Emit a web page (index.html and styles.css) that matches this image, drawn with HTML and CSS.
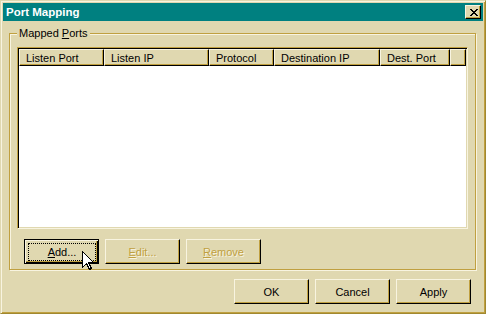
FILE: index.html
```html
<!doctype html>
<html lang="en">
<head>
    <meta charset="utf-8">
    <title>Port Mapping</title>
    <link rel="stylesheet" href="styles.css">
</head>
<body>
<div class="window">
    <div class="titlebar">
        <span class="title">Port Mapping</span>
        <button class="close" type="button" aria-label="Close">
            <svg width="8" height="7" viewBox="0 0 8 7" shape-rendering="crispEdges">
                <path d="M0 0h2v1h-2z M6 0h2v1h-2z M1 1h2v1h-2z M5 1h2v1h-2z M2 2h4v1h-4z M3 3h2v1h-2z M2 4h4v1h-4z M1 5h2v1h-2z M5 5h2v1h-2z M0 6h2v1h-2z M6 6h2v1h-2z" fill="#000"/>
            </svg>
        </button>
    </div>

    <div class="content">
        <div class="group">
            <div class="legend">Mapped <u>P</u>orts</div>
            <div class="listview">
                <div class="header">
                    <div class="col">Listen Port</div>
                    <div class="col">Listen IP</div>
                    <div class="col">Protocol</div>
                    <div class="col">Destination IP</div>
                    <div class="col">Dest. Port</div>
                    <div class="col"></div>
                </div>
            </div>
            <div class="group-buttons">
                <button class="btn default" type="button"><span class="focus"><u>A</u>dd...</span></button>
                <button class="btn" type="button" disabled><u>E</u>dit...</button>
                <button class="btn" type="button" disabled><u>R</u>emove</button>
            </div>
        </div>

        <div class="dialog-buttons">
            <button class="btn" type="button">OK</button>
            <button class="btn" type="button">Cancel</button>
            <button class="btn" type="button">Apply</button>
        </div>
    </div>

    <!-- mouse pointer over the Add button -->
    <svg class="cursor" width="13" height="20" viewBox="0 0 13 20" shape-rendering="crispEdges">
        <polygon points="0.5,0.5 0.5,16.5 4.5,12.5 7.5,18.5 9.5,17.5 6.5,11.5 11.5,11.5" fill="#fff" stroke="#000" stroke-width="1"/>
    </svg>
</div>
</body>
</html>
```

FILE: styles.css
```css
body {
    margin: 0;
    font-family: "Liberation Sans", Arial, sans-serif;
    font-size: 11px;
    color: #000;
    background: #e0d8b0;
}

.window {
    position: relative;
    box-sizing: border-box;
    width: 486px;
    height: 314px;
    padding: 2px;
    background: #e0d8b0;
    border: 1px solid;
    border-color: #e0d8b0 #a08830 #a08830 #e0d8b0;
    box-shadow: inset 1px 1px 0 #f8f4e0, inset -1px -1px 0 #c0a040;
}

.titlebar {
    display: flex;
    align-items: center;
    height: 18px;
    padding-left: 3px;
    background: #008080;
}

.title {
    flex: 1;
    color: #fff;
    font-weight: bold;
    font-size: 11.5px;
}

.close {
    display: flex;
    align-items: center;
    justify-content: center;
    box-sizing: border-box;
    width: 16px;
    height: 14px;
    margin-right: 2px;
    padding: 0 0 0 1px;
    background: #e0d8b0;
    border: 1px solid;
    border-color: #f8f4e0 #000 #000 #f8f4e0;
    box-shadow: inset -1px -1px 0 #c0a040;
}

.content {
    padding: 12px 7px 0 6px;
}

.group {
    box-sizing: border-box;
    height: 237px;
    border: 1px solid #c0a040;
    box-shadow: inset 1px 1px 0 #f8f4e0, 1px 1px 0 #f8f4e0;
}

.legend {
    width: fit-content;
    margin: -7px 0 0 7px;
    padding: 0 2px;
    line-height: 13px;
    background: #e0d8b0;
}

.listview {
    box-sizing: border-box;
    height: 182px;
    margin: 7px 7px 0 7px;
    padding: 1px;
    background: #fff;
    border: 1px solid;
    border-color: #c0a040 #f8f4e0 #f8f4e0 #c0a040;
    box-shadow: inset 1px 1px 0 #000, inset -1px -1px 0 #e0d8b0;
}

.header {
    display: grid;
    grid-template-columns: 85px 105px 65px 106px 70px 1fr;
    height: 17px;
}

.col {
    display: flex;
    align-items: center;
    padding-left: 6px;
    overflow: hidden;
    white-space: nowrap;
    background: #e0d8b0;
    border: 1px solid;
    border-color: #f8f4e0 #000 #000 #f8f4e0;
    box-shadow: inset -1px -1px 0 #c0a040;
}

.group-buttons {
    display: flex;
    gap: 6px;
    margin: 10px 0 0 14px;
}

.dialog-buttons {
    display: flex;
    justify-content: flex-end;
    gap: 6px;
    margin-top: 9px;
    padding-right: 5px;
}

.btn {
    box-sizing: border-box;
    width: 75px;
    height: 25px;
    padding: 0;
    font-family: inherit;
    font-size: 11px;
    color: #000;
    background: #e0d8b0;
    border: 1px solid;
    border-color: #f8f4e0 #000 #000 #f8f4e0;
    box-shadow: inset -1px -1px 0 #c0a040;
}

.btn:disabled {
    color: #c0a040;
    text-shadow: 1px 1px 0 #f8f4e0;
}

.btn.default {
    display: flex;
    padding: 3px 2px 2px 3px;
    border-color: #000;
    box-shadow: inset 1px 1px 0 #f8f4e0, inset -1px -1px 0 #000, inset -2px -2px 0 #c0a040;
}

.focus {
    flex: 1;
    display: flex;
    align-items: center;
    justify-content: center;
    border: 1px dotted #000;
}

.cursor {
    position: absolute;
    left: 81px;
    top: 250px;
}
```
